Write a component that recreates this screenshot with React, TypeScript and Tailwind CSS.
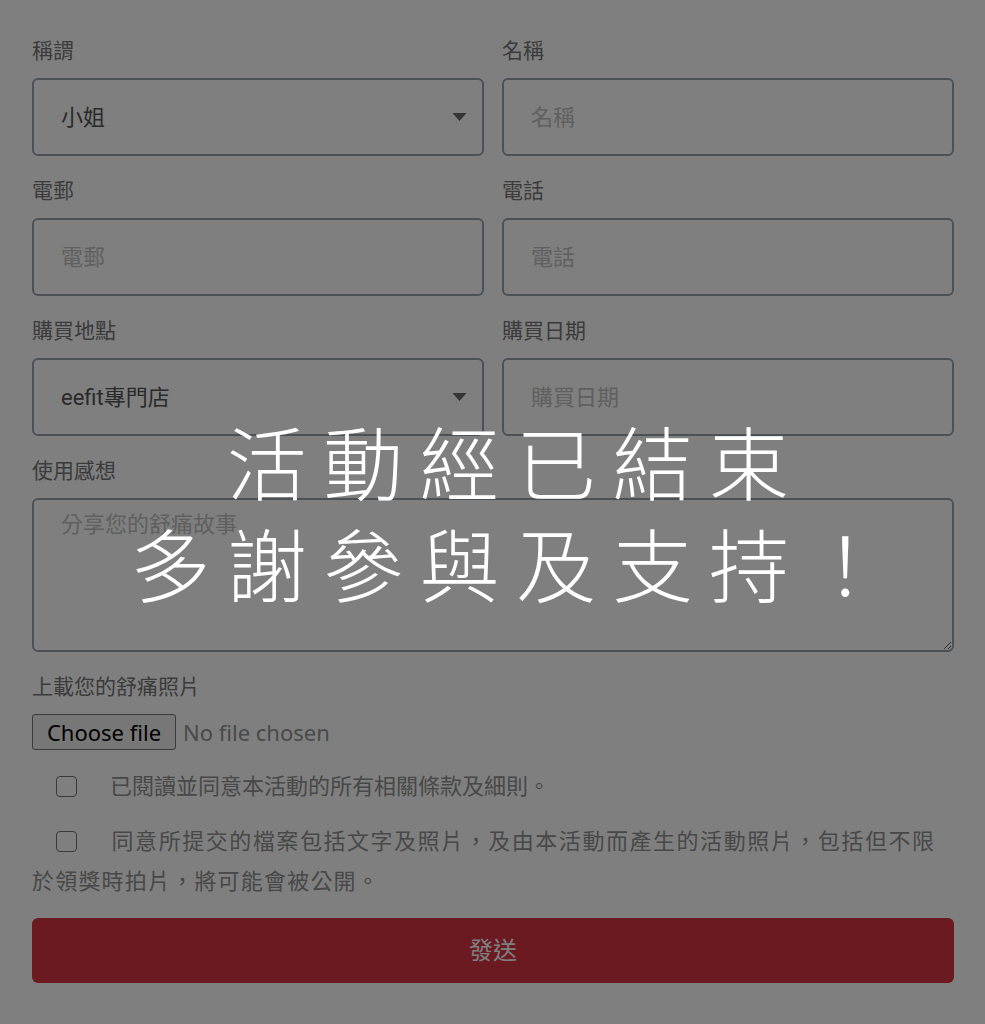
import React from "react";

const CJK = '"Noto Sans CJK TC", "Noto Sans CJK SC", sans-serif';

function Arrow() {
  return (
    <svg width="15" height="9" viewBox="0 0 15 9" className="absolute right-[15px] top-1/2 -translate-y-1/2">
      <path d="M0.5 0.5 L14.5 0.5 L7.5 8.5 Z" fill="#6a6a6a" />
    </svg>
  );
}

export default function App() {
  const label = "block text-[21px] leading-[30px] text-[#777777] mb-3";
  const box =
    "block w-full h-[78px] rounded-[6px] border-2 border-[#98a2ac] bg-white px-[27px] text-[22px] text-[#555555] outline-none placeholder:text-[#c0c0c0]";
  return (
    <div className="min-h-screen bg-white" style={{ fontFamily: `Roboto, ${CJK}` }}>
      <div className="pl-8 pr-[31px] pt-[36px] pb-10">
        <div className="grid grid-cols-2 gap-x-[18px]">
          <div className="mb-5">
            <span className={label}>稱謂</span>
            <div className={box + " relative flex items-center"}>
              <span>小姐</span>
              <Arrow />
            </div>
          </div>
          <div className="mb-5">
            <span className={label}>名稱</span>
            <input className={box} placeholder="名稱" />
          </div>
          <div className="mb-5">
            <span className={label}>電郵</span>
            <input className={box} placeholder="電郵" />
          </div>
          <div className="mb-5">
            <span className={label}>電話</span>
            <input className={box} placeholder="電話" />
          </div>
          <div className="mb-5">
            <span className={label}>購買地點</span>
            <div className={box + " relative flex items-center"}>
              <span>eefit專門店</span>
              <Arrow />
            </div>
          </div>
          <div className="mb-5">
            <span className={label}>購買日期</span>
            <input className={box} placeholder="購買日期" />
          </div>
        </div>

        <div className="mb-5">
          <span className={label}>使用感想</span>
          <textarea
            className="block w-full h-[154px] rounded-[6px] border-2 border-[#98a2ac] bg-white px-[27px] pt-2 text-[22px] leading-[33px] text-[#555555] outline-none placeholder:text-[#c0c0c0]"
            placeholder="分享您的舒痛故事"
          />
        </div>

        <div>
          <span className={label}>上載您的舒痛照片</span>
          <div className="flex items-center h-[36px] mt-px" style={{ fontFamily: '"Noto Sans", Roboto, sans-serif' }}>
            <span className="inline-flex items-center justify-center w-[144px] h-[36px] rounded-[3px] border border-[#767676] bg-[#efefef] text-[22px] text-black">
              Choose file
            </span>
            <span className="ml-[7px] text-[22px] text-[#949494]">No file chosen</span>
          </div>
        </div>

        <div className="mt-[17px] text-[22px] leading-[40px] text-[#909090]">
          <div>
            <span className="inline-block align-middle -mt-[3px] w-[21px] h-[21px] rounded-[4px] border-[1.5px] border-[#747474] bg-white ml-6 mr-[33px]" />
            已閱讀並同意本活動的所有相關條款及細則。
          </div>
          <div className="mt-[15px] pr-5 [text-align-last:justify] text-justify">
            <span className="inline-block align-middle -mt-[3px] w-[21px] h-[21px] rounded-[4px] border-[1.5px] border-[#747474] bg-white ml-6 mr-[33px]" />
            同意所提交的檔案包括文字及照片，及由本活動而產生的活動照片，包括但不限
          </div>
          <div className="tracking-[1.2px]">於領獎時拍片，將可能會被公開。</div>
        </div>

        <button className="mt-[16px] w-full h-[65px] rounded-[6px] bg-[#d63442] text-white text-[24px]">
          發送
        </button>
      </div>

      <div className="fixed inset-0 bg-black/50 flex items-center justify-center pl-[47px] pb-[5px]">
        <div
          className="text-white text-[80px] leading-[102px] tracking-[16.4px] text-center font-light"
          style={{ fontFamily: CJK }}
        >
          活動經已結束
          <br />
          多謝參與及支持！
        </div>
      </div>
    </div>
  );
}
